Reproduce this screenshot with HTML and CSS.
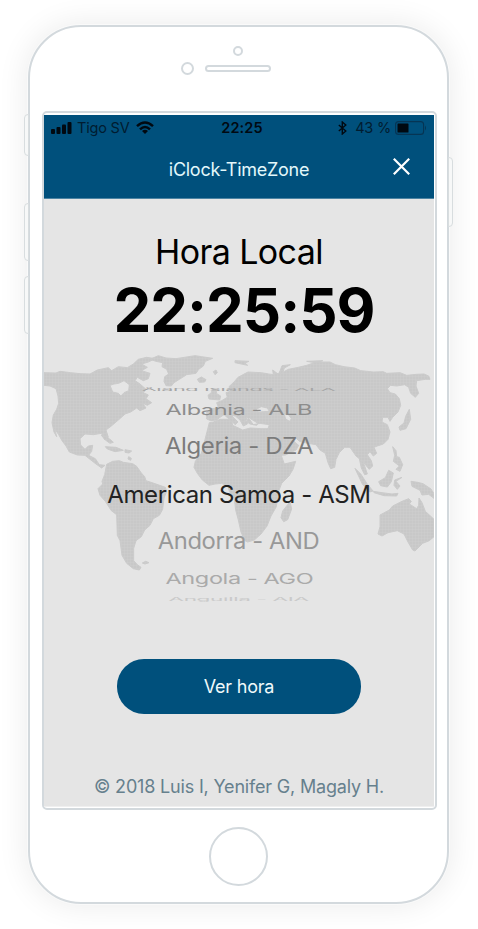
FILE: index.html
```html
<!DOCTYPE html>
<html lang="es">
<head>
<meta charset="utf-8">
<title>iClock-TimeZone</title>
<link rel="stylesheet" href="styles.css">
</head>
<body>
<main class="phone">
  <i class="key key-mute"></i><i class="key key-up"></i><i class="key key-down"></i><i class="key key-power"></i>
  <div class="top">
    <i class="sensor"></i>
    <div class="ear"><i class="camera"></i><i class="speaker"></i></div>
  </div>
  <section class="screen">
    <header class="header">
      <div class="status">
        <div class="side">
          <svg width="21" height="13" viewBox="0 0 21 13"><rect x="0" y="8" width="4" height="5" rx="1"/><rect x="5.5" y="6" width="4" height="7" rx="1"/><rect x="11" y="3.5" width="4" height="9.5" rx="1"/><rect x="16.5" y="1" width="4" height="12" rx="1"/></svg>
          <span class="carrier">Tigo SV</span>
          <svg width="18" height="13" viewBox="0 0 18 13"><g fill="none" stroke="#000911" stroke-width="2.5"><path d="M1 5.2Q9-2.2 17 5.2"/><path d="M4 8.4Q9 3.6 14 8.4"/></g><path d="M6 10q3-2.5 6 0l-3 3z"/></svg>
        </div>
        <b class="clock">22:25</b>
        <div class="side end">
          <svg class="bt" width="9" height="14" viewBox="0 0 9 14"><path d="M.8 4l7 6L4.3 13V1l3.5 3-7 6" fill="none" stroke="#000911" stroke-width="1.4"/></svg>
          <span class="percent">43 %</span>
          <svg width="32" height="14" viewBox="0 0 32 14"><rect x=".6" y=".6" width="28" height="12.8" rx="3" fill="none" stroke="#063554" stroke-width="1.1"/><rect x="2.5" y="2.5" width="11" height="9" rx=".6"/><path d="M30 4.5q2 2.5 0 5z" fill="#063554"/></svg>
        </div>
      </div>
      <div class="nav">
        <h1 class="title">iClock-TimeZone</h1>
        <svg class="close" width="17" height="17" viewBox="0 0 17 17"><path d="M.8.8l15.4 15.4M16.2.8L.8 16.2" fill="none" stroke="#fff" stroke-width="2.2"/></svg>
      </div>
    </header>
    <div class="content">
      <svg class="map" width="390" height="240" viewBox="12 0 1170 720">
        <defs><pattern id="dots" width="9" height="9" patternUnits="userSpaceOnUse"><rect width="9" height="9" fill="#c8c8c8"/><path d="M0 0H9M0 0V9" stroke="#cfcfcf" stroke-width="3"/></pattern></defs>
        <g fill="url(#dots)" stroke="#cbcbcb" stroke-width="3" stroke-linejoin="bevel">
          <path fill-rule="evenodd" d="M12 98L48 99 60 94 92 98 120 101 150 102 172 90 205 83 215 92 235 80 262 83 280 72 295 58 320 52 345 56 325 66 305 72 322 82 305 92 330 100 325 116 310 122 292 112 285 122 300 132 318 148 310 158 325 165 318 176 335 188 322 196 308 190 318 204 300 212 290 204 272 216 255 222 242 234 228 246 214 258 198 270 205 292 195 300 184 280 160 284 135 282 120 296 122 315 135 328 145 318 158 316 155 334 146 346 166 356 178 374 195 376 185 384 168 372 150 358 135 346 112 345 88 336 78 318 66 302 56 284 44 266 50 290 42 276 36 248 40 225 50 208 56 190 54 168 48 146 30 138 12 136zM210 136L218 156 235 160 243 168 252 158 266 152 268 134 252 122 236 130 222 132z"/>
          <path d="M278 132l12-5 12 14-8 8-13-6zM184 286l10 2 16 10 10 9-10 3-14-10zM196 320l32 2 22 9-25 4-23-8zM255 329l20 4-8 6-12-2zM266 350l8 5-2 6-8-4z"/>
          <path d="M330 58L355 47 378 54 408 56 465 47 485 50 518 55 496 64 490 78 476 88 468 100 440 104 418 118 402 128 394 138 378 137 372 124 374 110 386 102 380 88 366 80 368 68 348 64zM472 118l12-7 14 8-4 7-16 1zM520 95l8-5 4 8-7 6z"/>
          <path d="M200 373L218 364 238 362 250 367 278 371 290 379 304 399 314 410 318 422 342 430 376 442 380 454 372 474 368 508 358 526 340 536 330 556 314 570 304 590 288 602 281 625 281 662 292 674 303 682 298 690 280 686 260 670 246 646 240 602 232 586 230 524 214 512 196 484 180 466 174 446 188 432 186 424 194 404zM307 669l10-5 10 4-12 4z"/>
          <path d="M508 248l12-2 20-8 34 0 4 18 30 14 23-6 32 2 22 0 8 16 18 30 12 32 10 28 34-8-8 24-12 20-22 22-10 26-2 14-4 30-16 28-12 30-18 24-20 18-20 6-8-4-12-26-8-36-8-30-4-34-14-20-6-18-18-8-20 2-18 4-20-16-15-20-10-18 4-18 18-24 4-14zM750 485l5 22-12 32-12 6-8-12 5-20z"/>
          <path fill-rule="evenodd" d="M500 237L500 216 514 206 536 204 530 188 545 182 562 172 558 158 572 154 567 140 582 126 594 112 624 96 664 98 686 102 700 104 698 90 714 102 722 92 726 98 745 88 775 82 800 76 830 66 870 66 886 74 912 80 944 84 962 92 1000 96 1030 95 1040 100 1080 98 1100 106 1130 103 1152 102 1166 108 1170 118 1156 118 1130 122 1128 138 1136 160 1126 172 1112 160 1106 142 1094 134 1070 138 1052 136 1042 146 1050 158 1066 162 1078 176 1082 196 1074 216 1058 232 1050 244 1044 232 1028 232 1026 246 1042 254 1050 276 1044 298 1030 312 1012 318 1002 322 1010 340 1000 348 990 335 982 344 994 362 998 378 988 388 976 374 968 362 976 384 982 402 974 404 964 384 958 356 948 348 930 322 914 322 898 338 888 358 884 382 872 386 864 368 856 340 840 330 828 314 804 310 778 304 764 290 750 288 766 308 776 316 768 330 736 345 718 346 706 328 696 306 688 290 684 266 688 254 660 250 640 254 630 240 620 230 622 252 610 258 600 240 586 228 574 226 594 246 586 254 566 236 552 224 540 232 530 240 512 242zM648 208L656 216 688 214 682 204 664 200zM733 223L737 237 749 244 754 236 744 222zM628 234L654 250 650 256 630 252 616 242z"/>
          <path d="M504 166l10-8 4-12 10 3 2 12 12 7-3 12-32-3zM718 99l8-22 25-3-18 10-6 17zM800 64l48-2-18 7zM585 62l42 2-12 5 8 7-38-8zM1108 208l4 30-14 28-18 5-3-10 15-12 5-20z"/>
          <path d="M945 385l18 18 18 28 18 22-10 3-22-24zM1000 454l26 4 30 4 18-2-4 8-38-1-30-9zM1016 425l20-12 10-22 14 8-6 26-12 16-20-4zM1064 420l22-8-18 12 12 14-8 10-10-12zM1058 320l10 12 2 18 8 2 10 22-8 20-12-6 10-10-18-14 4-18zM1113 424l20 3 16 4 24 16 9 14v14l-16-12-20 2-6-14-24-12z"/>
          <path d="M1020 525L1048 510 1058 498 1086 484 1106 476 1114 484 1108 492 1130 506 1136 496 1137 474 1146 488 1156 514 1182 538V590L1168 602 1148 610 1125 633 1118 630 1104 606 1092 582 1072 572 1044 578 1026 588 1014 582 1020 560z"/>
        </g>
      </svg>
      <h2 class="local">Hora Local</h2>
      <div class="time">22:25:59</div>
      <div class="picker">
        <div class="row r1"><span>Åland Islands - ALA</span></div>
        <div class="row r2"><span>Albania - ALB</span></div>
        <div class="row r3"><span>Algeria - DZA</span></div>
        <div class="row r4"><span>American Samoa - ASM</span></div>
        <div class="row r5"><span>Andorra - AND</span></div>
        <div class="row r6"><span>Angola - AGO</span></div>
        <div class="row r7"><span>Anguilla - AIA</span></div>
      </div>
      <button class="button">Ver hora</button>
      <footer class="footer">© 2018 Luis I, Yenifer G, Magaly H.</footer>
    </div>
  </section>
  <i class="home"></i>
</main>
</body>
</html>
```
FILE: styles.css
```css
* { box-sizing: border-box; }
body { margin: 0; height: 929px; overflow: hidden; background: #fff; font-family: Inter, "Liberation Sans", sans-serif; }
h1, h2 { margin: 0; font-weight: 400; }
svg { display: block; flex: none; }
.phone {
  position: relative; width: 421px; height: 879px; margin: 24.5px 0 0 28px;
  display: flex; flex-direction: column; align-items: center;
  border: 2px solid #d3d9dd; border-radius: 53px; background: #fff;
  box-shadow: 0 0 0 1px #fafafa, 0 0 32px rgba(0, 0, 0, .09);
}
.key { position: absolute; left: -6px; width: 5px; border: 1.5px solid #d8dddf; border-radius: 4px 0 0 4px; background: #f7f8f8; }
.key-mute { top: 87px; height: 42px; }
.key-up { top: 176px; height: 58px; }
.key-down { top: 249px; height: 58px; }
.key-power { left: auto; right: -6px; top: 130px; height: 70px; border-radius: 0 4px 4px 0; }
.top { height: 84.5px; width: 100%; display: flex; flex-direction: column; align-items: center; padding-top: 19px; }
.sensor { width: 10px; height: 10px; margin-right: 1px; border: 2px solid #d3d9dd; border-radius: 50%; }
.ear { display: flex; align-items: center; gap: 11px; margin: 6px 26px 0 0; height: 14px; }
.camera { width: 13px; height: 13px; border: 2px solid #d3d9dd; border-radius: 50%; }
.speaker { width: 66px; height: 7px; border: 2px solid #d3d9dd; border-radius: 4px; }
.screen { width: 395px; height: 699px; margin-left: 2px; padding: 2px 1px 1px 0; border: 2px solid #d3d9dd; border-radius: 5px; background: #fff; flex: none; display: flex; flex-direction: column; }
.header { width: 390px; height: 84px; background: #00507c; flex: none; border-bottom: 1px solid #4c84a3; }
.status { height: 25px; padding: 0 7px; display: grid; grid-template-columns: 1fr auto 1fr; align-items: center; color: #000911; fill: #000911; }
.side { display: flex; align-items: center; }
.carrier { font-size: 14.5px; letter-spacing: -.2px; margin: 0 7px 0 5px; color: #001c30; white-space: nowrap; }
.clock { font-size: 14.5px; font-weight: 600; letter-spacing: .1px; margin-left: 6px; }
.end { justify-content: flex-end; }
.percent { font-size: 14.5px; letter-spacing: -.2px; margin: 0 4px 0 8px; color: #001c30; white-space: nowrap; }
.nav { display: flex; justify-content: center; height: 58px; position: relative; }
.title { font-size: 18px; letter-spacing: -.27px; line-height: 60px; color: #e3f8fb; }
.close { position: absolute; right: 24px; top: 18px; }
.content { position: relative; width: 390px; height: 609px; background: #e5e5e5; display: flex; flex-direction: column; align-items: center; text-align: center; border-bottom: 1px solid #efefef; }
.map { position: absolute; left: 0; top: 141px; }
.local { font-size: 34px; letter-spacing: -.6px; line-height: 42px; margin-top: 32px; white-space: nowrap; color: #000; }
.time { font-size: 60px; letter-spacing: -1px; line-height: 72px; font-weight: 700; margin-left: 10px; margin-top: 1px; color: #000; white-space: nowrap; }
.picker { position: relative; margin-top: 35px; width: 390px; height: 221px; overflow: hidden; }
.row { display: flex; align-items: center; justify-content: center; font-size: 24px; letter-spacing: -.4px; line-height: 28px; white-space: nowrap; }
.row span { display: block; flex: none; }
.r1 { height: 18px; color: #a6a6a6; } .r1 span { transform: scale(.9, .17); }
.r2 { height: 22px; color: #8d8d8d; } .r2 span { transform: scale(.98, .61); }
.r3 { height: 52px; color: #7b7b7b; } .r3 span { transform: scale(1, .93); }
.r4 { height: 44px; color: #222; }
.r5 { height: 50px; color: #989898; } .r5 span { transform: scale(.99, .93); }
.r6 { height: 24px; color: #aaa; } .r6 span { transform: scale(.98, .62); }
.r7 { height: 16px; color: #cacaca; } .r7 span { transform: scale(.94, .2); }
.button { width: 244px; height: 55px; margin-top: 57px; padding: 0; flex: none; border: 0; border-radius: 27px; background: #00507c; color: #f0fafb; font: 400 18px/55px Inter, "Liberation Sans", sans-serif; letter-spacing: -.2px; }
.footer { margin-top: 61px; font-size: 18px; letter-spacing: -.18px; line-height: 24px; color: #66808d; white-space: nowrap; }
.home { width: 59px; height: 59px; margin-top: 17px; border: 2px solid #d3d9dd; border-radius: 50%; flex: none; }
```
